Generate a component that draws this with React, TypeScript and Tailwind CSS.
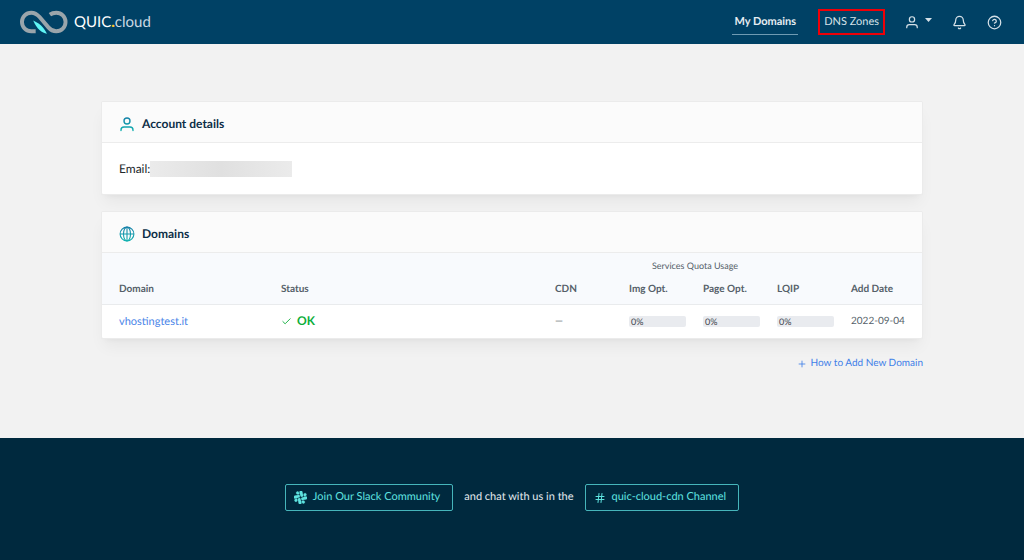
import { Bell, Check, CircleHelp, Hash, Plus } from "lucide-react"

const domains = [
  { name: "vhostingtest.it", status: "OK", cdn: "—", img: 0, page: 0, lqip: 0, added: "2022-09-04" },
]

function Logo() {
  return (
    <svg width="48" height="26" viewBox="0 0 49 26" fill="none">
      <path
        d="M16 22.500H11.500A9.500 9.500 0 0 1 11.500 3.500C15.500 3.500 17.500 5 20 8L29 18.500C31.500 21.500 34 22.500 37 22.500A9.500 9.500 0 0 0 37 3.500C34.500 3.500 32.500 4 30.500 5.500"
        stroke="#9aa5ab"
        strokeWidth="4"
      />
      <path d="M13.500 11.500L19 14.500C22.500 17 25.500 20.500 27.500 25C22.500 24.500 17 20 13.500 11.500Z" fill="#5ff5f5" />
    </svg>
  )
}

function UserIcon({ size, stroke }: { size: number; stroke: string }) {
  return (
    <svg width={size} height={size} viewBox="0 0 16 16" fill="none" stroke={stroke} strokeWidth="1.4" strokeLinecap="round">
      <circle cx="8" cy="5" r="3" />
      <path d="M2 14.500V14a3 3 0 0 1 3-3h6a3 3 0 0 1 3 3v.5" />
    </svg>
  )
}

function GlobeIcon() {
  return (
    <svg width="16" height="16" viewBox="0 0 16 16" fill="none" stroke="url(#teal)" strokeWidth="1.1">
      <circle cx="8" cy="8" r="6.900" />
      <ellipse cx="8" cy="8" rx="3.500" ry="6.900" />
      <path d="M8 1v14M1 8h14" />
    </svg>
  )
}

function SlackIcon() {
  return (
    <svg width="13" height="13" viewBox="0 0 24 24" fill="currentColor" stroke="currentColor" strokeWidth="0.6">
      <g transform="rotate(-14 12 12)">
        <path d="M5 15a2.500 2.500 0 1 1-2.500-2.500H5zM6.300 15a2.500 2.500 0 0 1 5 0v6.400a2.500 2.500 0 0 1-5 0zM8.800 5A2.500 2.500 0 1 1 11.300 2.500V5zM8.800 6.300a2.500 2.500 0 0 1 0 5H2.500a2.500 2.500 0 0 1 0-5zM19 8.800a2.500 2.500 0 1 1 2.500 2.500H19zM17.700 8.800a2.500 2.500 0 0 1-5 0V2.500a2.500 2.500 0 0 1 5 0zM15.200 19a2.500 2.500 0 1 1-2.500 2.500V19zM15.200 17.700a2.500 2.500 0 0 1 0-5h6.300a2.500 2.500 0 0 1 0 5z" />
      </g>
    </svg>
  )
}

function Quota({ value }: { value: number }) {
  return (
    <div className="h-[11px] w-[57px] rounded-xs bg-[#e9ebef] pl-[2px] text-[9px] leading-[11px] text-[#3d444c]">
      {value}%
    </div>
  )
}

export default function App() {
  return (
    <div className="flex min-h-screen flex-col bg-[#f2f2f2] font-['Lato',sans-serif] text-[#23282d] [text-rendering:geometricPrecision]">
      <header className="flex h-11 items-center justify-between bg-[#004165] pl-5 pr-[22px] text-[#d5e1e8]">
        <a href="#" className="flex items-center gap-[6px] text-[15px] text-white">
          <Logo />
          <span>
            QUIC<span className="font-black text-[#ffc629]">.</span>
            <span className="text-[#ccd9e3]">cloud</span>
          </span>
        </a>
        <nav className="flex items-center text-[11px]">
          <a href="#" className="mr-5 h-[26px] border-b border-[#6f9bb3] px-[2px] leading-[25px] font-bold text-[#e5edf2]">
            My Domains
          </a>
          <a href="#" className="mr-5 border-2 border-[#f00008] px-1 leading-[22px]">
            DNS Zones
          </a>
          <button aria-label="Account" className="mr-5 flex items-center gap-[6px]">
            <UserIcon size={14} stroke="currentColor" />
            <svg width="7" height="4" viewBox="0 0 7 4" fill="currentColor" className="mb-1">
              <path d="M0 0h7L3.500 4z" />
            </svg>
          </button>
          <button aria-label="Notifications" className="mr-5">
            <Bell size={15} strokeWidth={2} />
          </button>
          <button aria-label="Help">
            <CircleHelp size={15} strokeWidth={2} />
          </button>
        </nav>
      </header>

      <main className="mx-auto w-full max-w-[822px] flex-1 pt-[57px]">
        <svg width="0" height="0" className="absolute">
          <linearGradient id="teal" gradientUnits="userSpaceOnUse" x1="0" y1="0" x2="0" y2="16">
            <stop offset="0" stopColor="#167da8" />
            <stop offset="1" stopColor="#12b5b0" />
          </linearGradient>
        </svg>

        <section className="overflow-hidden rounded-xs border border-[#ebebeb] bg-white shadow-lg shadow-black/5">
          <div className="flex h-[41px] items-center gap-[7px] border-b border-[#ececec] bg-[#fbfbfb] pt-1 pl-[17px]">
            <UserIcon size={16} stroke="url(#teal)" />
            <h2 className="text-xs font-bold text-[#0d2f47]">Account details</h2>
          </div>
          <div className="flex h-[51px] items-center pl-[17px] text-xs">
            <span>Email:</span>
            <span className="h-4 w-[142px] bg-linear-to-r from-[#ebebeb] via-[#e0e0e0] to-[#ebebeb]" />
          </div>
        </section>

        <section className="mt-4 overflow-hidden rounded-xs border border-[#ebebeb] bg-white shadow-lg shadow-black/5">
          <div className="flex h-[41px] items-center gap-[7px] border-b border-[#ececec] bg-[#fbfbfb] pt-1 pl-[17px]">
            <GlobeIcon />
            <h2 className="text-xs font-bold text-[#0d2f47]">Domains</h2>
          </div>
          <table className="w-full table-fixed text-left text-[10px] text-[#555f69]">
            <colgroup>
              <col className="w-[162px]" />
              <col />
              <col className="w-[74px]" />
              <col className="w-[74px]" />
              <col className="w-[74px]" />
              <col className="w-[74px]" />
              <col className="w-[88px]" />
            </colgroup>
            <thead className="bg-[#f8fafd]">
              <tr className="h-5 text-[9px]">
                <td colSpan={3} />
                <th colSpan={3} className="pt-[6px] pr-14 text-center font-normal">Services Quota Usage</th>
                <td />
              </tr>
              <tr className="h-[31px] border-b border-[#e9ebed]">
                <th className="pt-[2px] pl-[17px]">Domain</th>
                <th className="pt-[2px] pl-[17px]">Status</th>
                <th className="pt-[2px] pl-[17px]">CDN</th>
                <th className="pt-[2px] pl-[17px]">Img Opt.</th>
                <th className="pt-[2px] pl-[17px]">Page Opt.</th>
                <th className="pt-[2px] pl-[17px]">LQIP</th>
                <th className="pt-[2px] pl-[17px]">Add Date</th>
              </tr>
            </thead>
            <tbody>
              {domains.map((domain) => (
                <tr key={domain.name} className="h-[34px]">
                  <td className="pt-px pl-[17px] text-[11px]">
                    <a href="#" className="text-[#4a85e8]">{domain.name}</a>
                  </td>
                  <td className="pl-[17px]">
                    <span className="flex items-center gap-[5px] text-xs font-bold text-[#0cae3a]">
                      <Check size={11} strokeWidth={2} />
                      {domain.status}
                    </span>
                  </td>
                  <td className="pt-px pl-[17px]">{domain.cdn}</td>
                  <td className="pl-[17px]"><Quota value={domain.img} /></td>
                  <td className="pl-[17px]"><Quota value={domain.page} /></td>
                  <td className="pl-[17px]"><Quota value={domain.lqip} /></td>
                  <td className="pt-px pl-[17px]">{domain.added}</td>
                </tr>
              ))}
            </tbody>
          </table>
        </section>

        <div className="mt-[17px] mb-16 flex justify-end">
          <a href="#" className="flex items-center gap-1 text-[10px] text-[#3f7fe8]">
            <Plus size={10} strokeWidth={2} />
            How to Add New Domain
          </a>
        </div>
      </main>

      <footer className="flex h-[122px] items-center justify-center gap-[11px] bg-[#00293e] pb-[3px] text-[11px] text-[#e3eaee]">
        <a href="#" className="flex h-[27px] items-center gap-[6px] rounded-xs border border-[#46b5bb] pr-3 pl-2 text-[#5fe3e0]">
          <SlackIcon />
          Join Our Slack Community
        </a>
        <span>and chat with us in the</span>
        <a href="#" className="flex h-[27px] items-center gap-[6px] rounded-xs border border-[#46b5bb] pr-3 pl-2 text-[#5fe3e0]">
          <Hash size={12} strokeWidth={2} />
          quic-cloud-cdn Channel
        </a>
      </footer>
    </div>
  )
}
